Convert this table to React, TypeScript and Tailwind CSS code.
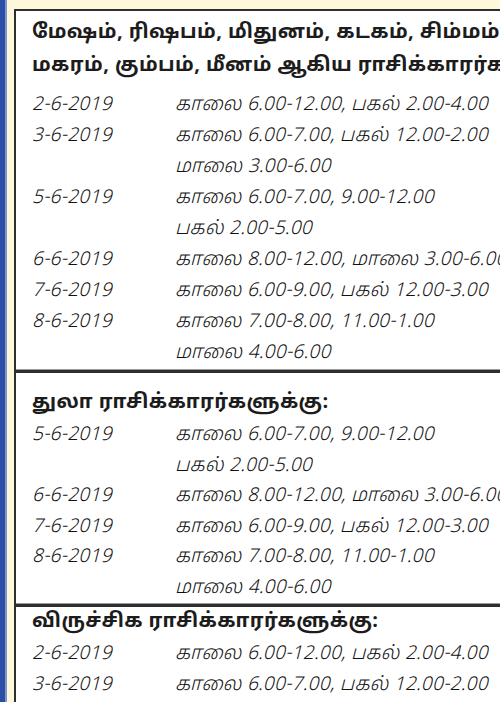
import React from "react";

type Row = { date?: string; text: string };

const tamil = { fontFamily: '"Noto Sans Tamil", "Lohit Tamil", "Noto Sans", sans-serif' };

const sec1: Row[] = [
  { date: "2-6-2019", text: "காலை 6.00-12.00, பகல் 2.00-4.00" },
  { date: "3-6-2019", text: "காலை 6.00-7.00, பகல் 12.00-2.00" },
  { text: "மாலை 3.00-6.00" },
  { date: "5-6-2019", text: "காலை 6.00-7.00, 9.00-12.00" },
  { text: "பகல் 2.00-5.00" },
  { date: "6-6-2019", text: "காலை 8.00-12.00, மாலை 3.00-6.00" },
  { date: "7-6-2019", text: "காலை 6.00-9.00, பகல் 12.00-3.00" },
  { date: "8-6-2019", text: "காலை 7.00-8.00, 11.00-1.00" },
  { text: "மாலை 4.00-6.00" },
];

const sec2: Row[] = [
  { date: "5-6-2019", text: "காலை 6.00-7.00, 9.00-12.00" },
  { text: "பகல் 2.00-5.00" },
  { date: "6-6-2019", text: "காலை 8.00-12.00, மாலை 3.00-6.00" },
  { date: "7-6-2019", text: "காலை 6.00-9.00, பகல் 12.00-3.00" },
  { date: "8-6-2019", text: "காலை 7.00-8.00, 11.00-1.00" },
  { text: "மாலை 4.00-6.00" },
];

const sec3: Row[] = [
  { date: "2-6-2019", text: "காலை 6.00-12.00, பகல் 2.00-4.00" },
  { date: "3-6-2019", text: "காலை 6.00-7.00, பகல் 12.00-2.00" },
];

function Rows({ rows, lh }: { rows: Row[]; lh: string }) {
  return (
    <div className="flex flex-col">
      {rows.map((r, i) => (
        <div key={i} className={`flex whitespace-nowrap text-[19px] font-light italic tracking-[0.3px] text-[#111111] ${lh}`} style={tamil}>
          <div className="w-[159px] shrink-0 pl-[16px]">{r.date ?? ""}</div>
          <div className="shrink-0">{r.text}</div>
        </div>
      ))}
    </div>
  );
}

function Sep() {
  return <div className="h-[4px] border-t border-[#9a9a9a] bg-[#2e2e2e]" />;
}

export default function App() {
  return (
    <div className="flex h-[702px] w-[500px] overflow-hidden bg-[#fdf8dc]">
      <div className="w-[5px] shrink-0 bg-[#2b4ea6]" />
      <div className="w-[2px] shrink-0 bg-[#7f95cc]" />
      <div className="flex min-w-0 flex-1 flex-col pl-[7px] pt-[9px]">
        <div className="flex-1 overflow-hidden border-l-[2px] border-t-[2px] border-[#2e2e2e] bg-white">
          <div className="pt-[6px] pl-[16px] text-[20px] font-bold leading-[33px] tracking-[0.4px] text-[#1c1c1c] whitespace-nowrap" style={tamil}>
            <div>மேஷம், ரிஷபம், மிதுனம், கடகம், சிம்மம், கன்னி,</div>
            <div>மகரம், கும்பம், மீனம் ஆகிய ராசிக்காரர்களுக்கு:</div>
          </div>
          <div className="pt-[7px]">
            <Rows rows={sec1} lh="leading-[31px]" />
          </div>
          <Sep />
          <div className="pt-[14px] pl-[16px] text-[20px] font-bold leading-[33px] tracking-[0.4px] text-[#1c1c1c] whitespace-nowrap" style={tamil}>
            துலா ராசிக்காரர்களுக்கு:
          </div>
          <div>
            <Rows rows={sec2} lh="leading-[30.5px]" />
          </div>
          <Sep />
          <div className="pl-[16px] text-[20px] font-bold leading-[30px] tracking-[0.4px] text-[#1c1c1c] whitespace-nowrap" style={tamil}>
            விருச்சிக ராசிக்காரர்களுக்கு:
          </div>
          <div className="pt-[2px]">
            <Rows rows={sec3} lh="leading-[31px]" />
          </div>
        </div>
      </div>
    </div>
  );
}
